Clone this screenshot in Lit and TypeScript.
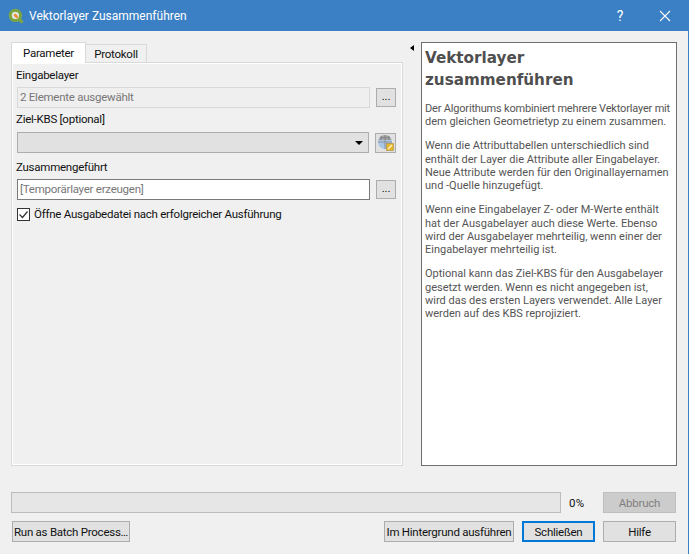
import { LitElement, css, html } from 'lit'
import { customElement } from 'lit/decorators.js'

/**
 * QGIS processing dialog
 */
@customElement('app-root')
export class AppRoot extends LitElement {
  static styles = css`
    :host {
      display: flex;
      flex-direction: column;
      width: 689px;
      height: 554px;
      box-sizing: border-box;
      overflow: hidden;
      background: #f0f0f0;
      border-right: 1px solid #3b7fc4;
      font-family: Roboto, 'Noto Sans', sans-serif;
      font-size: 11.5px;
      letter-spacing: -0.25px;
      color: #111;
    }

    .titlebar {
      display: flex;
      align-items: center;
      height: 31px;
      flex: none;
      background: #3b7fc4;
      color: #fff;
      font-size: 12px;
      letter-spacing: 0;
    }

    .logo {
      width: 16px;
      height: 16px;
      margin: 0 5px 0 8px;
    }

    .title {
      flex: 1;
    }

    .help {
      width: 24px;
      margin-right: 27px;
      text-align: center;
      font-size: 14px;
    }

    .close {
      width: 12px;
      height: 12px;
      margin-right: 17px;
    }

    .main {
      display: flex;
      box-sizing: border-box;
      height: 435px;
      flex: none;
      padding: 11px 11px 0;
    }

    .left {
      display: flex;
      flex-direction: column;
      width: 392px;
    }

    .tabs {
      display: flex;
      align-items: flex-end;
      height: 20px;
      flex: none;
      position: relative;
      z-index: 1;
    }

    .tab {
      display: flex;
      align-items: center;
      justify-content: center;
      box-sizing: border-box;
      height: 18px;
      width: 61px;
      border: 1px solid #d9d9d9;
      border-left: none;
      border-bottom: none;
    }

    .tab.active {
      height: 21px;
      width: 75px;
      margin-bottom: -1px;
      border-left: 1px solid #d9d9d9;
      background: #fff;
    }

    .panel {
      flex: 1;
      display: flex;
      flex-direction: column;
      box-sizing: border-box;
      padding: 4px 6px 0 4px;
      border: 1px solid #d9d9d9;
      box-shadow: inset 0 0 0 1px #fff;
    }

    .label {
      height: 16px;
      line-height: 16px;
    }

    .row {
      display: flex;
      align-items: center;
      justify-content: space-between;
      height: 21px;
      margin: 4px 0 3px;
    }

    .row.crs-row {
      margin: 5px 0 6px;
    }

    .row.output-row {
      margin: 4px 0 6px;
    }

    .field {
      box-sizing: border-box;
      width: 353px;
      height: 21px;
      margin-left: 1px;
      line-height: 19px;
      padding-left: 2px;
      color: #777;
      background: #fff;
      border: 1px solid #7a7a7a;
    }

    .field.disabled {
      background: #efefef;
      border-color: #d9d9d9;
    }

    .dots {
      display: flex;
      align-items: center;
      justify-content: center;
      box-sizing: border-box;
      width: 20px;
      height: 19px;
      padding-bottom: 3px;
      background: #e1e1e1;
      border: 1px solid #adadad;
    }

    .combo {
      display: flex;
      align-items: center;
      justify-content: flex-end;
      box-sizing: border-box;
      width: 352px;
      height: 21px;
      margin-left: 1px;
      padding-right: 5px;
      background: #e1e1e1;
      border: 1px solid #adadad;
    }

    .caret {
      width: 0;
      height: 0;
      border: 4px solid transparent;
      border-top: 4px solid #000;
      border-bottom: none;
    }

    .crs {
      display: flex;
      align-items: center;
      justify-content: center;
      box-sizing: border-box;
      width: 21px;
      height: 20px;
      background: #e1e1e1;
      border: 1px solid #adadad;
    }

    .crs svg {
      width: 17px;
      height: 17px;
    }

    .check {
      display: flex;
      align-items: center;
      gap: 4px;
      height: 16px;
      margin-left: 1px;
    }

    .box {
      width: 13px;
      height: 13px;
    }

    .splitter {
      display: flex;
      justify-content: center;
      width: 18px;
      flex: none;
      padding-top: 1px;
    }

    .arrow {
      width: 0;
      height: 0;
      margin-top: 2px;
      border: 3.5px solid transparent;
      border-right: 4px solid #000;
      border-left: none;
    }

    .help-pane {
      box-sizing: border-box;
      width: 256px;
      height: 424px;
      padding: 5px 0 0 3px;
      background: #fff;
      border: 1px solid #6f6f6f;
      color: #555;
      font-size: 11px;
      letter-spacing: 0;
      line-height: 13.33px;
      white-space: nowrap;
    }

    h2 {
      margin: 0 0 11px;
      font-family: 'DejaVu Sans', sans-serif;
      font-size: 15.2px;
      font-weight: bold;
      line-height: 21.5px;
      color: #4f4f4f;
    }

    p {
      margin: 0 0 10.67px;
    }

    .tight {
      letter-spacing: -0.18px;
    }

    .progress-row {
      display: flex;
      align-items: center;
      height: 21px;
      margin-top: 26px;
      padding: 0 12px 0 11px;
      flex: none;
    }

    .progress {
      box-sizing: border-box;
      width: 550px;
      height: 21px;
      background: #e6e6e6;
      border: 1px solid #bcbcbc;
    }

    .percent {
      width: 42px;
      padding-left: 8px;
      box-sizing: border-box;
      letter-spacing: 0.3px;
    }

    .btn {
      display: flex;
      align-items: center;
      justify-content: center;
      box-sizing: border-box;
      height: 21px;
      background: #e1e1e1;
      border: 1px solid #adadad;
      white-space: nowrap;
    }

    .btn.off {
      width: 73px;
      background: #cccccc;
      border-color: #bfbfbf;
      color: #808080;
    }

    .buttons {
      display: flex;
      align-items: center;
      height: 21px;
      margin-top: 8px;
      padding: 0 12px;
      flex: none;
    }

    .batch {
      width: 118px;
    }

    .spacer {
      flex: 1;
    }

    .bg {
      width: 130px;
      margin-right: 8px;
    }

    .default {
      width: 73px;
      margin-right: 8px;
      border: 2px solid #0078d7;
    }

    .hilfe {
      width: 73px;
    }
  `

  render() {
    return html`
      <div class="titlebar">
        <svg class="logo" viewBox="0 0 16 16">
          <path d="M9 9l5.6 5.6" stroke="#7fa644" stroke-width="3" />
          <circle cx="7.4" cy="7.4" r="4.2" fill="#dfe6d8" />
          <circle cx="7.4" cy="7.4" r="5.2" fill="none" stroke="#7aa63f" stroke-width="3" />
          <path d="M6.4 6.4l3.2 3.2" stroke="#ee8a34" stroke-width="2.6" />
        </svg>
        <span class="title">Vektorlayer Zusammenführen</span>
        <span class="help">?</span>
        <svg class="close" viewBox="0 0 12 12">
          <path d="M1 1l10 10M11 1L1 11" stroke="#fff" stroke-width="1.1" fill="none" />
        </svg>
      </div>

      <div class="main">
        <div class="left">
          <div class="tabs">
            <div class="tab active">Parameter</div>
            <div class="tab">Protokoll</div>
          </div>
          <div class="panel">
            <div class="label">Eingabelayer</div>
            <div class="row">
              <div class="field disabled">2 Elemente ausgewählt</div>
              <div class="dots">...</div>
            </div>
            <div class="label">Ziel-KBS [optional]</div>
            <div class="row crs-row">
              <div class="combo"><span class="caret"></span></div>
              <div class="crs">
                <svg viewBox="0 0 17 17">
                  <circle cx="8" cy="8" r="7" fill="#a9c6e6" />
                  <path d="M1.4 6A7 7 0 0 1 14.6 6z" fill="#a3a3a3" />
                  <path d="M1 8h14M8 1v14M3 3.6h10M4 1.8v4.2M12 1.8v4.2" stroke="#7d7d7d" stroke-width="0.7" fill="none" />
                  <rect x="9.5" y="9.5" width="7" height="7" fill="#e8b52e" stroke="#a58a3c" stroke-width="0.6" />
                  <path d="M11 15l4-4" stroke="#fff6cc" stroke-width="1.3" />
                </svg>
              </div>
            </div>
            <div class="label">Zusammengeführt</div>
            <div class="row output-row">
              <div class="field">[Temporärlayer erzeugen]</div>
              <div class="dots">...</div>
            </div>
            <div class="check">
              <svg class="box" viewBox="0 0 13 13">
                <rect x="0.5" y="0.5" width="12" height="12" fill="#fff" stroke="#333" />
                <path d="M2.5 6.5l3 3 5-6" fill="none" stroke="#333" stroke-width="1.2" />
              </svg>
              <span>Öffne Ausgabedatei nach erfolgreicher Ausführung</span>
            </div>
          </div>
        </div>

        <div class="splitter"><span class="arrow"></span></div>

        <div class="help-pane">
          <h2>Vektorlayer<br />zusammenführen</h2>
          <p><span class="tight">Der Algorithums kombiniert mehrere Vektorlayer mit</span><br />dem gleichen Geometrietyp zu einem zusammen.</p>
          <p>Wenn die Attributtabellen unterschiedlich sind<br />enthält der Layer die Attribute aller Eingabelayer.<br />Neue Attribute werden für den Originallayernamen<br />und -Quelle hinzugefügt.</p>
          <p>Wenn eine Eingabelayer Z- oder M-Werte enthält<br />hat der Ausgabelayer auch diese Werte. Ebenso<br />wird der Ausgabelayer mehrteilig, wenn einer der<br />Eingabelayer mehrteilig ist.</p>
          <p>Optional kann das Ziel-KBS für den Ausgabelayer<br />gesetzt werden. Wenn es nicht angegeben ist,<br />wird das des ersten Layers verwendet. Alle Layer<br />werden auf des KBS reprojiziert.</p>
        </div>
      </div>

      <div class="progress-row">
        <div class="progress"></div>
        <div class="percent">0%</div>
        <div class="btn off">Abbruch</div>
      </div>

      <div class="buttons">
        <div class="btn batch">Run as Batch Process…</div>
        <div class="spacer"></div>
        <div class="btn bg">Im Hintergrund ausführen</div>
        <div class="btn default">Schließen</div>
        <div class="btn hilfe">Hilfe</div>
      </div>
    `
  }
}
